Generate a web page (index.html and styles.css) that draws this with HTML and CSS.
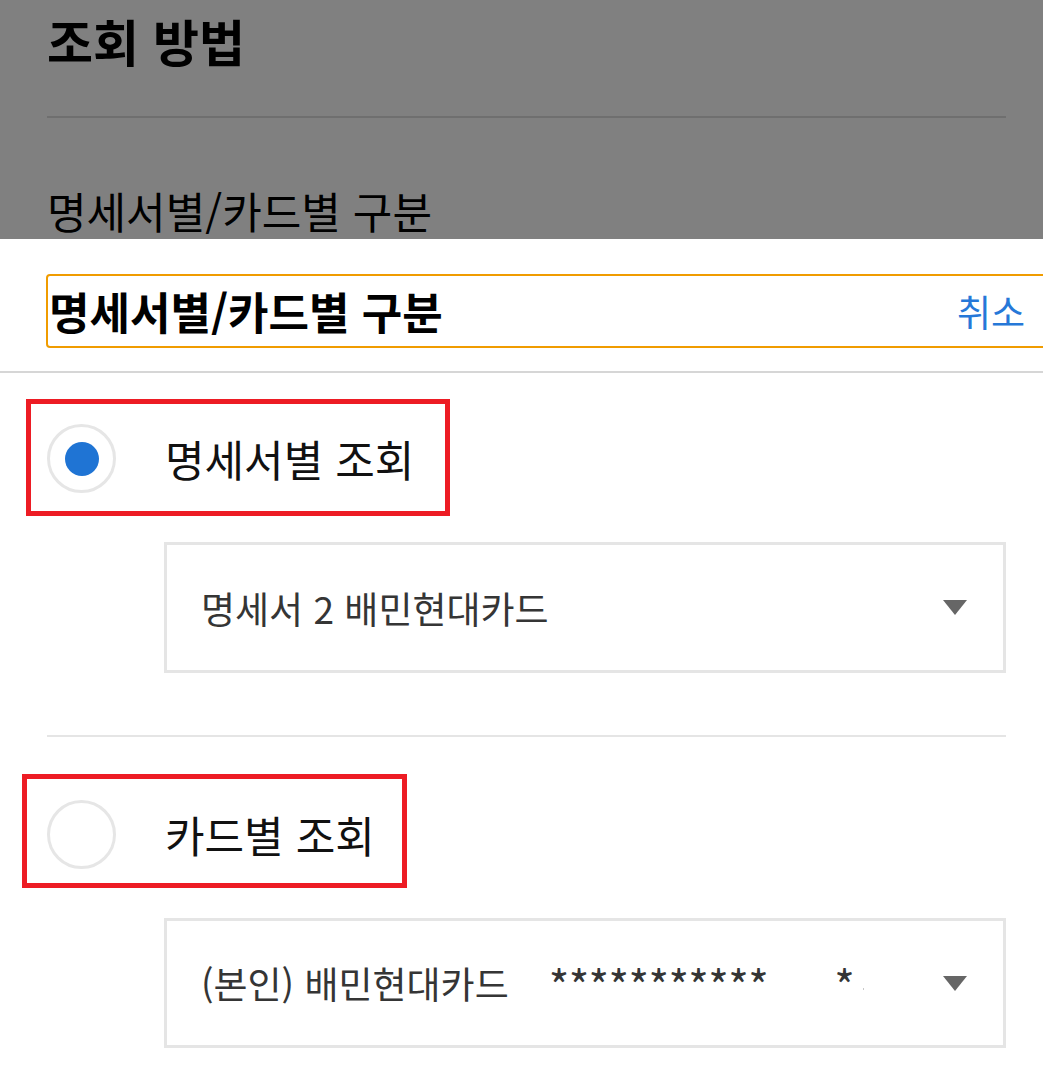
FILE: index.html
```html
<!DOCTYPE html>
<html lang="ko">
<head>
<meta charset="utf-8">
<title>명세서별/카드별 구분</title>
<link rel="stylesheet" href="styles.css">
</head>
<body>
  <div class="dim">
    <h1 class="dim-title">조회 방법</h1>
    <div class="dim-line"></div>
    <div class="dim-sub">명세서별/카드별 구분</div>
  </div>

  <div class="sheet">
    <div class="sheet-header">
      <span class="sheet-title">명세서별/카드별 구분</span>
      <span class="cancel">취소</span>
    </div>
    <div class="divider"></div>

    <div class="option option-first">
      <span class="radio radio-on"><span class="radio-dot"></span></span>
      <span class="option-label">명세서별 조회</span>
    </div>
    <div class="select select-first">
      <span class="select-text">명세서 2 배민현대카드</span>
      <span class="caret"></span>
    </div>

    <div class="divider divider-inset"></div>

    <div class="option option-second">
      <span class="radio"></span>
      <span class="option-label">카드별 조회</span>
    </div>
    <div class="select select-second">
      <span class="select-text">(본인) 배민현대카드<span class="mask">***********</span><span class="mask mask-last">*</span><span class="speck"></span></span>
      <span class="caret"></span>
    </div>
  </div>
</body>
</html>
```

FILE: styles.css
```css
html, body {
  margin: 0;
  padding: 0;
  overflow: hidden;
}
body {
  width: 1043px;
  height: 1068px;
  background: #ffffff;
  font-family: "Noto Sans CJK KR", "Noto Sans", sans-serif;
  color: #111111;
}

/* dimmed page behind the sheet */
.dim {
  height: 239px;
  overflow: hidden;
  background: #808080;
  padding: 0 37px 0 47px;
  box-sizing: border-box;
}
.dim-title {
  margin: 0;
  font-size: 50px;
  font-weight: 700;
  line-height: 80px;
  color: #000;
}
.dim-line {
  margin-top: 36px;
  height: 2px;
  background: #6f6f6f;
}
.dim-sub {
  margin-top: 62px;
  font-size: 43px;
  line-height: 60px;
  color: #000;
}

/* bottom sheet */
.sheet {
  background: #fff;
}
.sheet-header {
  margin: 35px -10px 0 46px;
  height: 74px;
  box-sizing: border-box;
  border: 2px solid #f09c00;
  border-radius: 4px;
  display: flex;
  align-items: center;
  justify-content: space-between;
  padding: 0 26px 0 1px;
}
.sheet-title {
  font-size: 44px;
  font-weight: 700;
  line-height: 70px;
  color: #000;
}
.cancel {
  font-size: 37px;
  line-height: 70px;
  color: #2678d8;
}
.divider {
  margin-top: 23px;
  height: 2px;
  background: #d6d6d6;
}
.divider-inset {
  margin: 62px 37px 0 47px;
  background: #e5e5e5;
}

.option {
  display: flex;
  align-items: center;
  width: fit-content;
  border: 5px solid #ed1c24;
  gap: 49px;
}
.option-first {
  margin: 26px 0 0 26px;
  padding: 20px 31px 18px 16px;
}
.option-second {
  margin: 37px 0 0 22px;
  padding: 21px 27px 14px 20px;
}
.radio {
  width: 69px;
  height: 69px;
  box-sizing: border-box;
  border: 3px solid #e6e6e6;
  border-radius: 50%;
  display: flex;
  align-items: center;
  justify-content: center;
  flex: none;
}
.radio-dot {
  width: 34px;
  height: 34px;
  border-radius: 50%;
  background: #1f74d4;
}
.option-label {
  font-size: 43px;
  line-height: 69px;
  color: #111;
}

.select {
  margin: 0 37px 0 164px;
  height: 131px;
  box-sizing: border-box;
  border: 3px solid #e5e5e5;
  display: flex;
  align-items: center;
  justify-content: space-between;
  padding: 0 36px 0 34px;
}
.select-first {
  margin-top: 26px;
}
.select-second {
  margin-top: 30px;
  height: 130px;
}
.select-text {
  font-size: 37px;
  line-height: 50px;
  color: #353535;
  white-space: nowrap;
  display: flex;
  align-items: center;
}
.mask {
  margin-left: 40px;
  font-size: 44px;
  letter-spacing: -0.6px;
  position: relative;
  top: 1px;
}
.mask-last {
  margin-left: 66px;
}
.speck {
  width: 1px;
  height: 2px;
  background: #c8c8c8;
  margin: 12px 0 0 9px;
}
.caret {
  width: 0;
  height: 0;
  border-left: 12.5px solid transparent;
  border-right: 12.5px solid transparent;
  border-top: 15px solid #666666;
  flex: none;
}
```
